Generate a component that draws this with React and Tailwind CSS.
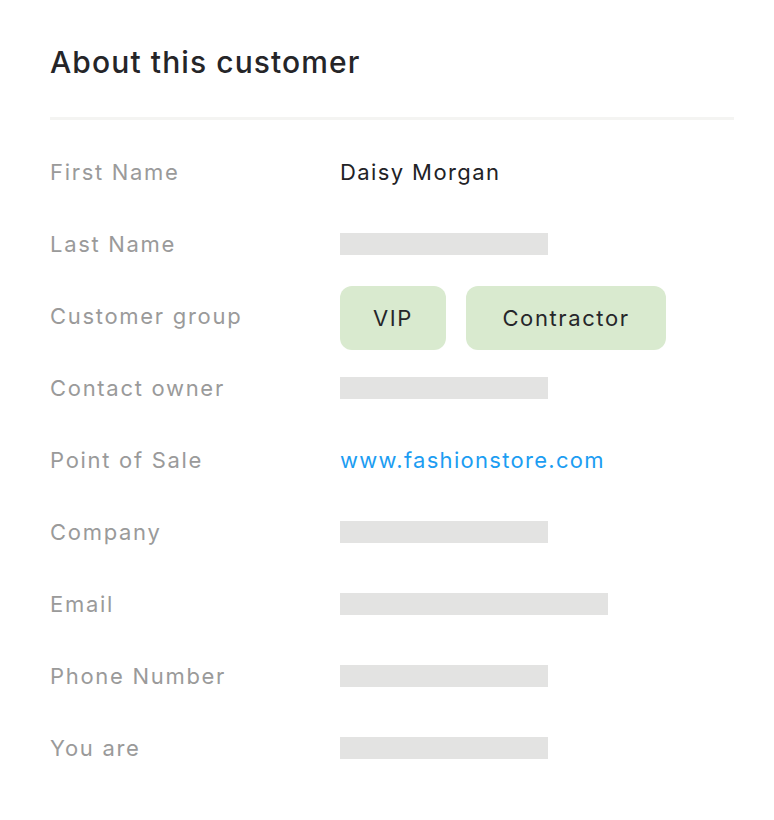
const ROWS = [
  { label: 'First Name', text: 'Daisy Morgan' },
  { label: 'Last Name', bar: 'w-[208px]' },
  { label: 'Customer group', chips: ['VIP', 'Contractor'] },
  { label: 'Contact owner', bar: 'w-[208px]' },
  { label: 'Point of Sale', link: 'www.fashionstore.com' },
  { label: 'Company', bar: 'w-[208px]' },
  { label: 'Email', bar: 'w-[268px]' },
  { label: 'Phone Number', bar: 'w-[208px]' },
  { label: 'You are', bar: 'w-[208px]' },
];

const Value = ({ row }) => {
  if (row.text) return <span className="text-[22px] tracking-[1.4px] text-[#222226]">{row.text}</span>;
  if (row.link) return <a className="text-[22px] tracking-[1.3px] text-[#1c9df2]">{row.link}</a>;
  if (row.chips) {
    return (
      <div className="mt-1 flex gap-5">
        {row.chips.map(c => (
          <span
            key={c}
            className={`flex h-16 items-center justify-center rounded-xl bg-[#d9eacf] text-[22px] tracking-[1.6px] text-[#26262a] ${c === 'VIP' ? 'w-[106px]' : 'w-[200px]'}`}
          >
            {c}
          </span>
        ))}
      </div>
    );
  }
  return <div className={`h-[22px] bg-[#e3e3e2] ${row.bar}`} />;
};

export default function App() {
  return (
    <div className="min-h-[820px] bg-white pl-[50px] pr-10 pt-10 font-['Inter',sans-serif]">
      <h1 className="text-[30px] leading-[44px] font-medium tracking-[1.1px] text-[#252528]">About this customer</h1>
      <div className="mt-[33px] h-[3px] bg-[#f4f4f2]" />
      <div className="mt-4 flex flex-col">
        {ROWS.map(r => (
          <div key={r.label} className="flex h-[72px] items-center">
            <span className="w-[290px] text-[22px] text-[#9a9a9a] tracking-[1.7px]">{r.label}</span>
            <Value row={r} />
          </div>
        ))}
      </div>
    </div>
  );
}
